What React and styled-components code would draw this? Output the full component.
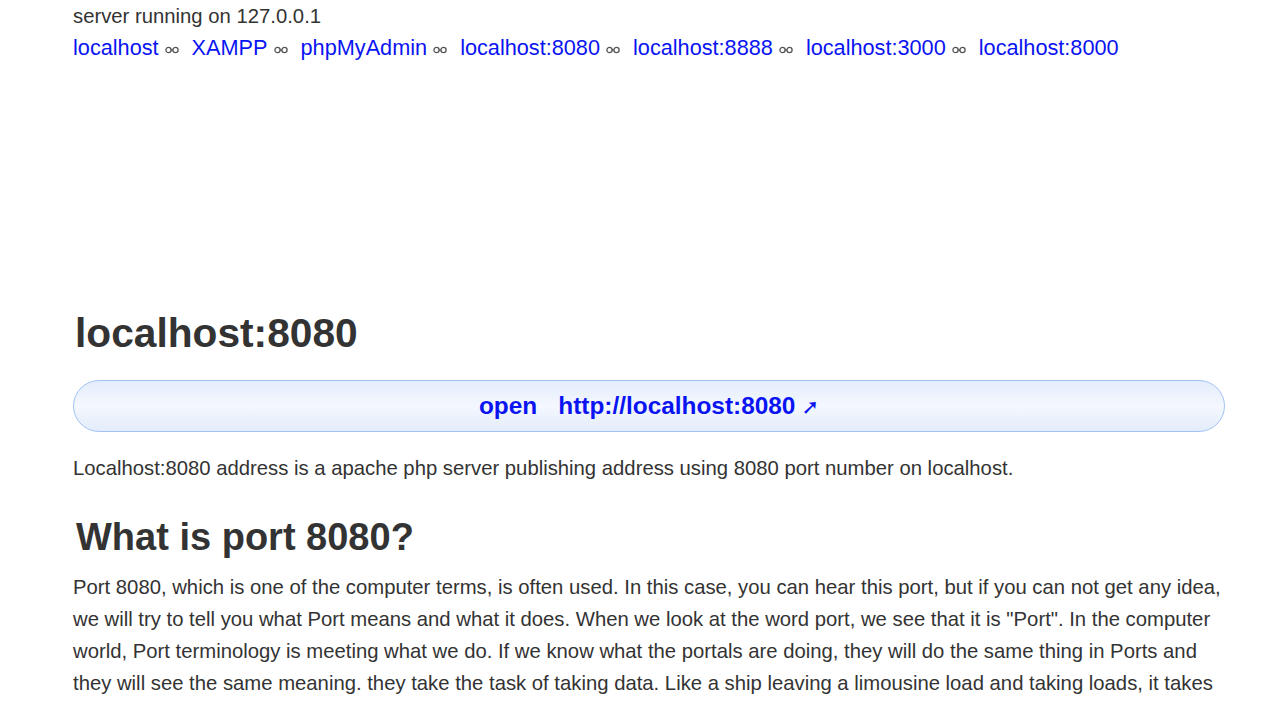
import React from "react";
import styled, { createGlobalStyle } from "styled-components";

const Global = createGlobalStyle`
  html, body { margin: 0; padding: 0; background: #fff; }
  body { font-family: "Liberation Sans", Arial, sans-serif; color: #333; }
  a { text-decoration: none; }
`;

const Page = styled.div`
  width: 1152px;
  margin-left: 73px;
`;

const Status = styled.div`
  font-size: 20.3px;
  line-height: 32px;
`;

const LinkBar = styled.nav`
  font-size: 21.7px;
  line-height: 32px;
  white-space: nowrap;
`;

const NavLink = styled.a`
  color: #0a14f2;
`;

const SepIcon = styled.svg`
  width: 14px;
  height: 8px;
  margin: 0 13px 0 6px;
  vertical-align: 1px;
`;

const Sep = () => (
  <SepIcon viewBox="0 0 14 8">
    <circle cx="3.5" cy="4" r="2.6" fill="none" stroke="#555" strokeWidth="1.3" />
    <circle cx="10.5" cy="4" r="2.6" fill="none" stroke="#555" strokeWidth="1.3" />
    <line x1="6.1" y1="4" x2="7.9" y2="4" stroke="#555" strokeWidth="1.3" />
  </SepIcon>
);

const AdSlot = styled.div`
  height: 220px;
`;

const Title = styled.h1`
  font-size: 40.7px;
  line-height: 48px;
  font-weight: bold;
  margin: 25px 0 0 0;
  padding-left: 2px;
  color: #333;
`;

const OpenButton = styled.a`
  margin-top: 23px;
  height: 52px;
  box-sizing: border-box;
  border: 1px solid #a3c3f5;
  border-radius: 26px;
  background: linear-gradient(to bottom, #e4edfc 0%, #f4f8fe 50%, #e3ecfb 100%);
  display: flex;
  align-items: center;
  justify-content: center;
  gap: 21px;
  font-weight: bold;
  font-size: 24.4px;
  color: #0a14f2;
`;

const Arrow = styled.span`
  font-family: "DejaVu Sans", sans-serif;
  font-weight: bold;
  font-size: 21px;
  margin-left: 6px;
`;

const Text = styled.p`
  font-size: 20.3px;
  line-height: 32px;
  margin: ${(p) => p.$mt || 0}px 0 0 0;
`;

const SubTitle = styled.h2`
  font-size: 38px;
  line-height: 46px;
  font-weight: bold;
  margin: 30px 0 0 0;
  padding-left: 3px;
  color: #333;
`;

const links = [
  "localhost",
  "XAMPP",
  "phpMyAdmin",
  "localhost:8080",
  "localhost:8888",
  "localhost:3000",
  "localhost:8000",
];

export default function App() {
  return (
    <>
      <Global />
      <Page>
        <Status>server running on 127.0.0.1</Status>
        <LinkBar>
          {links.map((l, i) => (
            <React.Fragment key={l}>
              {i > 0 && <Sep />}
              <NavLink href="#">{l}</NavLink>
            </React.Fragment>
          ))}
        </LinkBar>
        <AdSlot />
        <Title>localhost:8080</Title>
        <OpenButton href="#">
          <span>open</span>
          <span>
            http://localhost:8080<Arrow>➚</Arrow>
          </span>
        </OpenButton>
        <Text $mt={20}>
          Localhost:8080 address is a apache php server publishing address using 8080 port number on localhost.
        </Text>
        <SubTitle>What is port 8080?</SubTitle>
        <Text $mt={11}>
          Port 8080, which is one of the computer terms, is often used. In this case, you can hear this port, but if you can not get any idea, we will try to tell you what Port means and what it does. When we look at the word port, we see that it is "Port". In the computer world, Port terminology is meeting what we do. If we know what the portals are doing, they will do the same thing in Ports and they will see the same meaning. they take the task of taking data. Like a ship leaving a limousine load and taking loads, it takes data and sends it to the place where it should go.
        </Text>
      </Page>
    </>
  );
}
